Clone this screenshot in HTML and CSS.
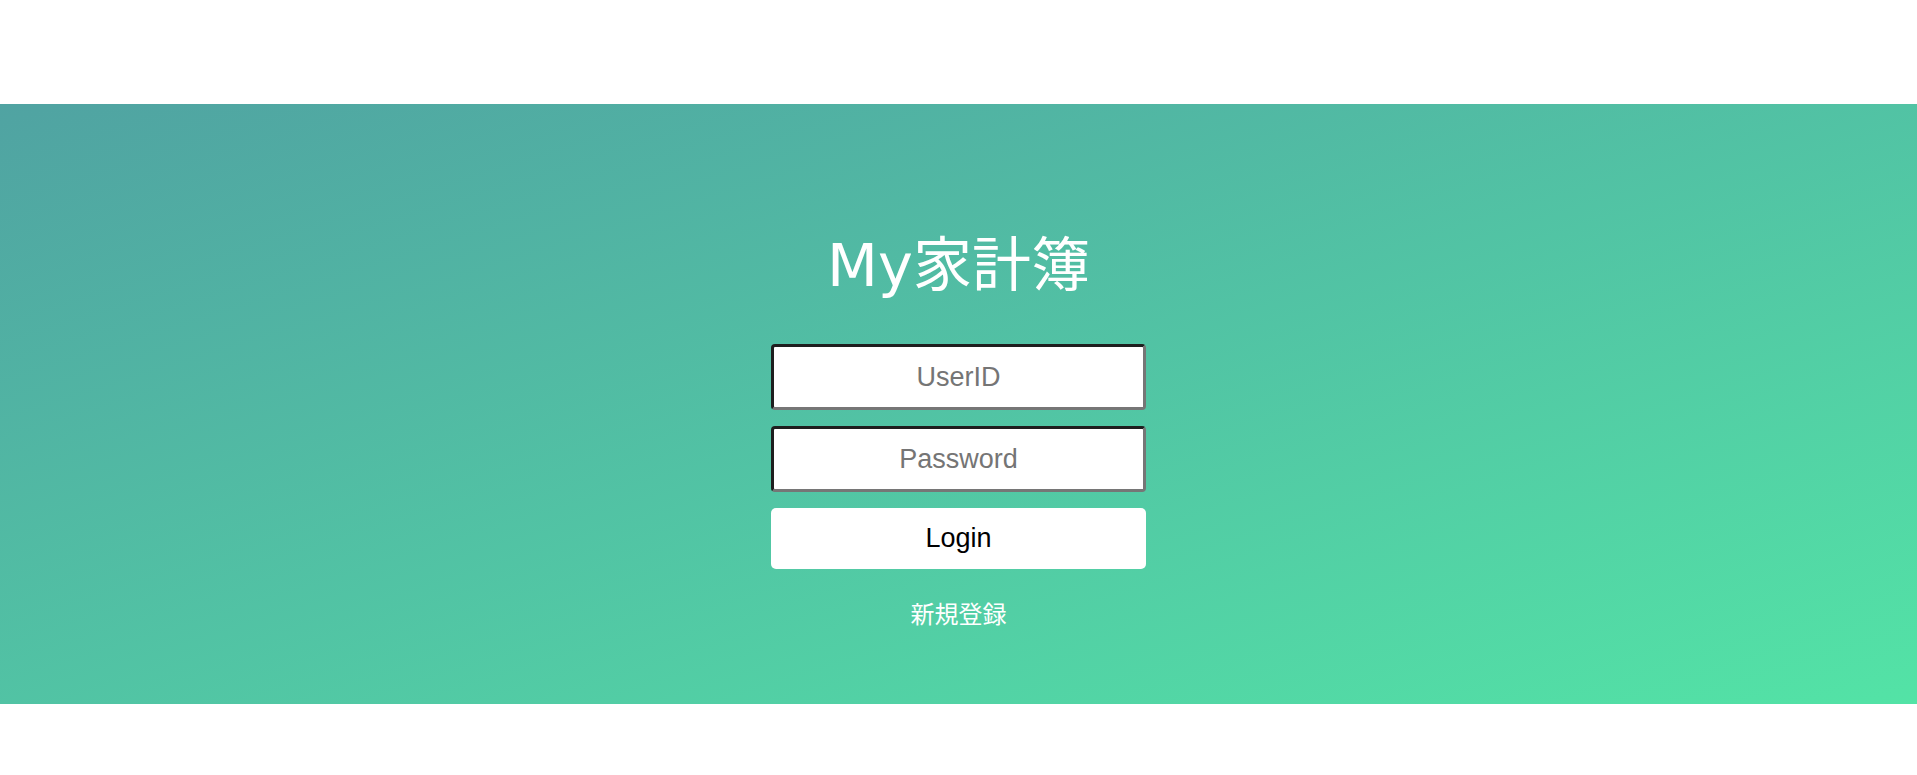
FILE: index.html
```html
<!DOCTYPE html>
<html lang="ja">
<head>
<meta charset="utf-8">
<title>My家計簿</title>
<link rel="stylesheet" href="styles.css">
</head>
<body>
<div class="page">
  <section class="band">
    <h1 class="title">My家計簿</h1>
    <form class="form">
      <input class="field" type="text" placeholder="UserID">
      <input class="field" type="password" placeholder="Password">
      <button class="login" type="button">Login</button>
    </form>
    <a class="register" href="#">新規登録</a>
  </section>
</div>
</body>
</html>
```
FILE: styles.css
```css
html, body {
  margin: 0;
  padding: 0;
  background: #ffffff;
}
.page {
  padding-top: 104px;
  min-height: 775px;
  box-sizing: border-box;
}
.band {
  height: 600px;
  background: linear-gradient(to bottom right, #50a3a2 0%, #53e3a6 100%);
  display: flex;
  flex-direction: column;
  align-items: center;
  box-sizing: border-box;
  padding-top: 130px;
}
.title {
  margin: 0;
  height: 64px;
  color: #ffffff;
  font-family: "DejaVu Sans", "Noto Sans CJK JP", sans-serif;
  font-weight: normal;
  font-size: 59px;
  line-height: 64px;
}
.form {
  display: flex;
  flex-direction: column;
  gap: 16px;
  margin-top: 46px;
  width: 375px;
}
.field {
  box-sizing: border-box;
  width: 375px;
  height: 66px;
  margin: 0;
  border: 3px solid;
  border-color: #1e1e1e #767676 #767676 #1e1e1e;
  border-radius: 4px;
  background: #ffffff;
  text-align: center;
  font-family: "Liberation Sans", Arial, sans-serif;
  font-size: 27px;
  color: #333333;
  outline: none;
}
.field::placeholder {
  color: #757575;
}
.login {
  box-sizing: border-box;
  width: 375px;
  height: 61px;
  margin: 0;
  border: none;
  border-radius: 5px;
  background: #ffffff;
  color: #000000;
  font-family: "Liberation Sans", Arial, sans-serif;
  font-size: 27px;
  cursor: pointer;
}
.register {
  margin-top: 28px;
  color: #ffffff;
  text-decoration: none;
  font-family: "Noto Sans CJK JP", sans-serif;
  font-size: 24px;
  line-height: 32px;
}
```
